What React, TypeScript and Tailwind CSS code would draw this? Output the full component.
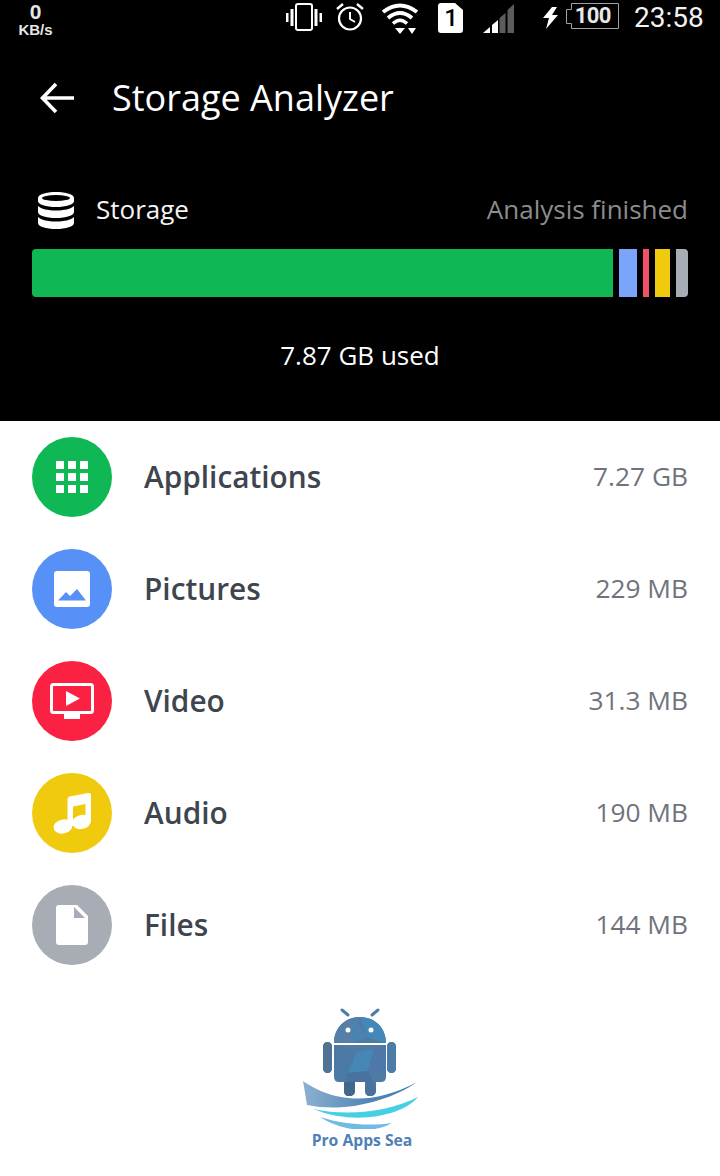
import React from "react";

interface Category {
  name: string;
  size: string;
  color: string;
  icon: React.ReactNode;
}

const AppsIcon = () => (
  <svg width="34" height="34" viewBox="0 0 34 34" fill="#fff">
    <rect x="1" y="1" width="8" height="8" />
    <rect x="13" y="1" width="8" height="8" />
    <rect x="25" y="1" width="8" height="8" />
    <rect x="1" y="13" width="8" height="8" />
    <rect x="13" y="13" width="8" height="8" />
    <rect x="25" y="13" width="8" height="8" />
    <rect x="1" y="25" width="8" height="8" />
    <rect x="13" y="25" width="8" height="8" />
    <rect x="25" y="25" width="8" height="8" />
  </svg>
);

const PictureIcon = () => (
  <svg width="36" height="36" viewBox="0 0 36 36">
    <rect width="36" height="36" rx="3" fill="#fff" />
    <path d="M4 29.500 L12 21 L16 25 L23 18 L32 29.500 Z" fill="#5790f7" />
  </svg>
);

const VideoIcon = () => (
  <svg width="44" height="36" viewBox="0 0 44 36" fill="none">
    <rect x="1.500" y="1.500" width="41" height="28" rx="2" stroke="#fff" strokeWidth="3" />
    <path d="M16 8 L30 15.500 L16 23 Z" fill="#fff" />
    <rect x="14" y="31" width="16" height="5" fill="#fff" />
  </svg>
);

const MusicIcon = () => (
  <svg width="38" height="41" viewBox="0 0 38 41" fill="#fff">
    <path d="M14.500 6 Q14.500 4 16.500 3.500 L35 0 Q38 -0.500 38 2 V29 H32.500 V11 L20 13.500 V33 H14.500 Z" />
    <ellipse cx="10" cy="33.500" rx="9.500" ry="7" transform="rotate(-12 10 33.500)" />
    <ellipse cx="28.500" cy="29" rx="9.500" ry="7" transform="rotate(-12 28.500 29)" />
  </svg>
);

const FileIcon = () => (
  <svg width="32" height="40" viewBox="0 0 32 40">
    <path d="M3 0 H21 L32 11 V37 Q32 40 29 40 H3 Q0 40 0 37 V3 Q0 0 3 0 Z" fill="#fff" />
    <path d="M18 2 L29 13 H18 Z" fill="#a8acb4" />
  </svg>
);

const categories: Category[] = [
  { name: "Applications", size: "7.27 GB", color: "bg-[#0fb855]", icon: <AppsIcon /> },
  { name: "Pictures", size: "229 MB", color: "bg-[#5790f7]", icon: <PictureIcon /> },
  { name: "Video", size: "31.3 MB", color: "bg-[#fb2142]", icon: <VideoIcon /> },
  { name: "Audio", size: "190 MB", color: "bg-[#f0ca0c]", icon: <MusicIcon /> },
  { name: "Files", size: "144 MB", color: "bg-[#a8acb4]", icon: <FileIcon /> },
];

const StatusBar = () => (
  <div className="flex h-10 items-start text-white">
    <div className="ml-[18px] flex w-[35px] flex-col items-center font-['Liberation_Sans',sans-serif] font-bold">
      <span className="h-[22px] text-[21px] leading-[24px] text-[#e6e6e6]">0</span>
      <span className="mt-[1px] text-[15px] leading-[14px] text-[#e6e6e6]">KB/s</span>
    </div>
    <svg className="ml-[233px] mt-[3px]" width="36" height="28" viewBox="0 0 36 28" fill="none">
      <rect x="10" y="1" width="16" height="26" rx="2" stroke="#fff" strokeWidth="2" />
      <rect x="0" y="10" width="2.500" height="9" fill="#fff" />
      <rect x="4.500" y="6" width="3" height="17" fill="#fff" />
      <rect x="28.500" y="6" width="3" height="17" fill="#fff" />
      <rect x="33.500" y="10" width="2.500" height="9" fill="#fff" />
    </svg>
    <svg className="ml-[14px] mt-[3px]" width="28" height="28" viewBox="0 0 28 28" fill="none">
      <circle cx="14" cy="15.500" r="11" stroke="#fff" strokeWidth="2.200" />
      <path d="M14 9 V16 L19 19" stroke="#fff" strokeWidth="2" />
      <path d="M1 6 L7 1 M27 6 L21 1" stroke="#fff" strokeWidth="2.400" />
    </svg>
    <svg className="ml-[17px] mt-[3px]" width="40" height="31" viewBox="0 0 40 31" fill="none">
      <path d="M2 9 Q19 -4 36 9" stroke="#fff" strokeWidth="4" />
      <path d="M7 15 Q19 5 31 15" stroke="#fff" strokeWidth="4" />
      <path d="M12 20.500 Q19 14 26 20.500" stroke="#fff" strokeWidth="3.500" />
      <path d="M14 25 H24 L19 31 Z" fill="#fff" />
      <path d="M27 25 H35 L31 31 Z" fill="#fff" />
    </svg>
    <svg className="ml-[17px] mt-[3px]" width="25" height="30" viewBox="0 0 25 30">
      <path d="M3 0 H17 L25 7 V27 Q25 30 22 30 H3 Q0 30 0 27 V3 Q0 0 3 0 Z" fill="#fff" />
    </svg>
    <span className="-ml-[19px] mt-[5px] w-[14px] text-center font-['Roboto',sans-serif] text-[24px] leading-[26px] font-medium text-black">
      1
    </span>
    <svg className="ml-[25px] mt-[3px]" width="31" height="30" viewBox="0 0 31 30">
      <path d="M0 30 L7 24 V30 Z" fill="#fff" />
      <path d="M9 22 L15 17 V30 H9 Z" fill="#fff" />
      <path d="M16.500 15 L22.500 10 V30 H16.500 Z" fill="#5c5c5c" />
      <path d="M24.500 7 L31 1 V30 H24.500 Z" fill="#5c5c5c" />
    </svg>
    <svg className="ml-[29px] mt-[7px]" width="15" height="22" viewBox="0 0 15 22">
      <path d="M9 0 H14 L9 8 H15 L3 22 L6 11 H0 Z" fill="#fff" />
    </svg>
    <div className="relative ml-[8px] mt-[3px] flex h-[26px] w-[53px] items-center justify-end pr-[8px]">
      <svg className="absolute left-0 top-0" width="53" height="26" viewBox="0 0 53 26" fill="none">
        <path d="M5.500 0.500 H52.500 V25.500 H5.500 V20.500 H0.500 V6.500 H5.500 Z" stroke="#a0a0a0" />
      </svg>
      <span className="font-['Roboto',sans-serif] text-[22px] leading-[24px] font-bold tracking-[-0.5px] text-[#e8e8e8]">100</span>
    </div>
    <span className="ml-[15px] mt-[1px] font-['Roboto',sans-serif] text-[28px] leading-[34px] font-normal text-[#f2f2f2]">23:58</span>
  </div>
);

const Header = () => (
  <div className="flex h-[116px] items-center pl-[40px]">
    <svg width="34" height="32" viewBox="0 0 34 32" fill="none">
      <path d="M34 16 H3 M16 2 L2.500 16 L16 30" stroke="#fff" strokeWidth="3.600" />
    </svg>
    <span className="ml-[38px] text-[36px] leading-[44px] text-white">Storage Analyzer</span>
  </div>
);

const StorageSummary = () => (
  <div className="px-8">
    <div className="flex h-[38px] items-center">
      <svg className="ml-[6px]" width="36" height="37" viewBox="0 0 36 37" fill="#fff">
        <path d="M18 0 C28 0 36 2.500 36 6 V9 C36 12.500 28 15 18 15 C8 15 0 12.500 0 9 V6 C0 2.500 8 0 18 0 Z" />
        <ellipse cx="18" cy="6" rx="14" ry="3" fill="#000" />
        <path d="M0 14 C3 17 10 18.500 18 18.500 C26 18.500 33 17 36 14 V20 C36 23.500 28 26 18 26 C8 26 0 23.500 0 20 Z" />
        <path d="M0 25 C3 28 10 29.500 18 29.500 C26 29.500 33 28 36 25 V31 C36 34.500 28 37 18 37 C8 37 0 34.500 0 31 Z" />
      </svg>
      <span className="ml-[22px] mb-[2px] text-[26px] text-[#f4f4f4]">Storage</span>
      <span className="ml-auto mb-[2px] text-[26px] text-[#8c8c8c]">Analysis finished</span>
    </div>
    <div className="mt-[20px] flex h-12 gap-[6px]">
      <div className="w-[581px] rounded-l bg-[#0fb855]" />
      <div className="w-[18px] bg-[#7ba4fb]" />
      <div className="w-[6px] bg-[#f2506a]" />
      <div className="w-[15px] bg-[#f0ca0c]" />
      <div className="w-[12px] rounded-r bg-[#a8acb4]" />
    </div>
    <div className="mt-[40px] text-center text-[26px] leading-9 text-white">7.87 GB used</div>
  </div>
);

const CategoryRow = ({ item }: { item: Category }) => (
  <div className="flex h-20 items-center">
    <div className={`flex h-20 w-20 items-center justify-center rounded-full ${item.color}`}>{item.icon}</div>
    <span className="ml-8 text-[29.800px] font-semibold text-[#3f454e]">{item.name}</span>
    <span className="ml-auto text-[26.300px] text-[#6f747c]">{item.size}</span>
  </div>
);

const Logo = () => (
  <div className="mt-[36px] flex flex-col items-center">
    <svg width="140" height="128" viewBox="0 0 140 128">
      <defs>
        <clipPath id="droid">
          <path d="M44 42 C44 26 56 16 70 16 C84 16 96 26 96 42 Z" />
          <path d="M44 44 H96 V76 Q96 81 91 81 H86 V89 Q86 95 80 95 Q75 95 75 89 V81 H65 V89 Q65 95 59 95 Q54 95 54 89 V81 H49 Q44 81 44 76 Z" />
          <rect x="33" y="41" width="9" height="31" rx="4.500" />
          <rect x="97" y="41" width="9" height="31" rx="4.500" />
        </clipPath>
        <linearGradient id="wave1" x1="0" x2="1" y1="0" y2="0">
          <stop offset="0" stopColor="#8db0d0" />
          <stop offset="0.6" stopColor="#4f84b4" />
          <stop offset="1" stopColor="#3d7fb5" />
        </linearGradient>
      </defs>
      <path d="M52 9 L58 14 M88 9 L82 14" stroke="#4d7da6" strokeWidth="3" strokeLinecap="round" />
      <g clipPath="url(#droid)">
        <rect x="30" y="10" width="80" height="90" fill="#4f7ba3" />
        <polygon points="44,16 70,16 62,42 40,44" fill="#557fa8" />
        <polygon points="70,16 100,20 98,44 78,36" fill="#4388b8" />
        <polygon points="62,16 78,36 62,42" fill="#4a83ad" />
        <polygon points="44,44 66,52 58,80 42,72" fill="#4a7aa5" />
        <polygon points="66,52 84,48 78,70 58,72" fill="#4587b6" />
        <polygon points="84,48 98,44 98,72 78,70" fill="#4f78a8" />
        <polygon points="58,72 78,70 90,96 52,96" fill="#4a72a0" />
        <rect x="54" y="81" width="11" height="16" fill="#41688a" />
        <rect x="30" y="40" width="13" height="34" fill="#4f7296" />
        <rect x="97" y="40" width="13" height="34" fill="#4b7da6" />
      </g>
      <circle cx="58" cy="29" r="2.500" fill="#fff" />
      <circle cx="81" cy="29" r="2.500" fill="#fff" />
      <path d="M13 80 C30 92 70 112 127 81 C100 100 55 112 17 104 Z" fill="url(#wave1)" />
      <path d="M23 108 C60 116 100 110 128 96 C112 115 65 125 23 108 Z" fill="#49cfe4" />
      <path d="M30 116 C55 124 80 125 102 122 C85 132 55 132 30 116 Z" fill="#6fbbe6" />
    </svg>
    <span className="mt-[1px] ml-[4px] font-['Open_Sans',sans-serif] text-[15.700px] leading-5 font-bold text-[#4f80b8]">
      Pro Apps Sea
    </span>
  </div>
);

export default function App() {
  return (
    <div className="h-[1176px] w-[720px] overflow-hidden bg-white font-['Open_Sans',sans-serif]">
      <div className="h-[421px] bg-black">
        <StatusBar />
        <Header />
        <div className="pt-[35px]">
          <StorageSummary />
        </div>
      </div>
      <div className="flex flex-col gap-8 px-8 pt-4">
        {categories.map((item) => (
          <CategoryRow key={item.name} item={item} />
        ))}
      </div>
      <Logo />
    </div>
  );
}
